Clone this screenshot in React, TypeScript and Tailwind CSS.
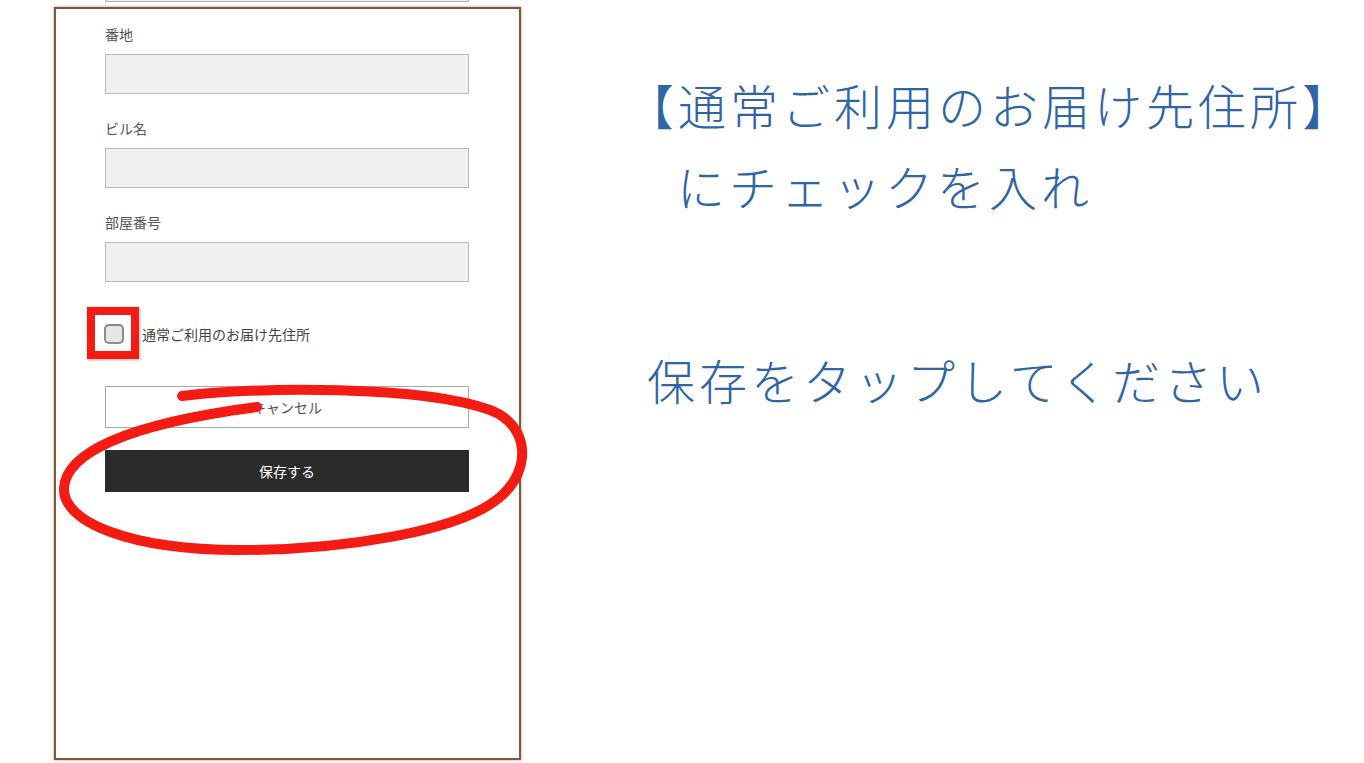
import React from 'react';

const jp = { fontFamily: '"Noto Sans CJK JP", "Noto Sans", sans-serif' };

const Field: React.FC<{ label: string; first?: boolean }> = ({ label, first }) => (
  <div className={first ? '' : 'mt-[24px]'}>
    <div className="text-[14px] leading-[20px] text-[#555]">{label}</div>
    <div className="mt-[10px] h-[40px] w-[364px] border border-[#b9b9b9] bg-[#f0f0f0]" />
  </div>
);

const App: React.FC = () => {
  return (
    <div className="relative flex h-[763px] w-[1364px] overflow-hidden bg-white" style={jp}>
      {/* phone screenshot */}
      <div className="ml-[54px] flex w-[467px] flex-col">
        <div className="ml-[51px] h-[2px] w-[364px] border-x border-b border-[#b0b0b0] bg-[#f0f0f0]" />
        <div className="mt-[5px] h-[753px] border-2 border-[#865531] bg-white px-[49px] pt-[15px] shadow-[0_0_3px_rgba(0,0,0,0.35)]">
          <Field label="番地" first />
          <Field label="ビル名" />
          <Field label="部屋番号" />

          <div className="mt-[42px] flex items-center">
            <div className="relative -ml-[1px]">
              <div className="h-[20px] w-[20px] rounded-[5px] border-2 border-[#8a8a8a] bg-[#e6e6e6]" />
              <div className="absolute -left-[17px] -top-[17px] h-[52px] w-[52px] border-[8px] border-[#f41c12] shadow-[1px_1px_3px_rgba(0,0,0,0.3)]" />
            </div>
            <span className="ml-[18px] text-[14px] leading-[20px] text-[#444]">通常ご利用のお届け先住所</span>
          </div>

          <button className="mt-[42px] flex h-[42px] w-[364px] items-center justify-center border border-[#a8a8a8] bg-white text-[14px] text-[#555]">
            キャンセル
          </button>
          <button className="mt-[22px] flex h-[42px] w-[364px] items-center justify-center bg-[#2b2b2b] text-[14px] text-white">
            保存する
          </button>
        </div>
      </div>

      {/* instructions */}
      <div className="ml-[105px] flex flex-col pt-[76px] text-[48px] font-light leading-[56px] tracking-[4px] text-[#2f64a6]">
        <div>【通常ご利用のお届け先住所】</div>
        <div className="ml-[51px] mt-[25px]">にチェックを入れ</div>
        <div className="ml-[21px] mt-[138px]">保存をタップしてください</div>
      </div>

      {/* hand-drawn red circle */}
      <svg className="pointer-events-none absolute left-0 top-0" width="1364" height="763" viewBox="0 0 1364 763">
        <path
          d="M 182 396 C 260 387, 420 385, 490 410 C 530 425, 532 470, 500 497 C 460 532, 340 550, 240 550 C 130 550, 62 522, 64 488 C 66 455, 120 425, 257 407"
          fill="none"
          stroke="#f41c12"
          strokeWidth="10"
          strokeLinecap="round"
        />
      </svg>
    </div>
  );
};

export default App;
